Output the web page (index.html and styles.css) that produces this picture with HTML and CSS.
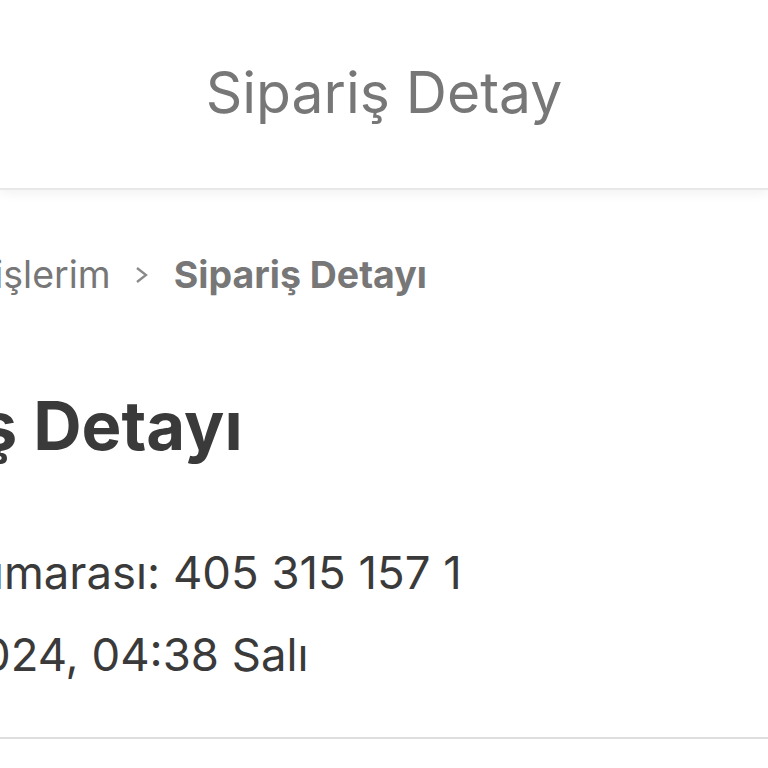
FILE: index.html
```html
<!DOCTYPE html>
<html lang="tr">

<head>
    <meta charset="UTF-8">
    <title>Sipariş Detay</title>
    <link rel="stylesheet" href="styles.css">
</head>

<body>
    <div class="topbar">Sipariş Detay</div>
    <div class="page">
        <div class="crumbs">
            <span>Hesabım</span>
            <svg class="chev" width="13" height="18" viewBox="0 0 13 18"><polyline points="2,2 11,9 2,16" fill="none" stroke="#8a8a8a" stroke-width="2.3"/></svg>
            <span>Siparişlerim</span>
            <svg class="chev" width="13" height="18" viewBox="0 0 13 18"><polyline points="2,2 11,9 2,16" fill="none" stroke="#8a8a8a" stroke-width="2.3"/></svg>
            <span class="current">Sipariş Detayı</span>
        </div>
        <h1 class="title">Sipariş Detayı</h1>
        <div class="meta">
            <p>Sipariş Numarası: 405 315 157 1</p>
            <p>12 Mart 2024, 04:38 Salı</p>
        </div>
    </div>
    <div class="divider"></div>
</body>

</html>
```
FILE: styles.css
```css
* {
    padding: 0;
    margin: 0;
}

body {
    font-family: Inter, "Noto Sans", sans-serif;
    background-color: #fff;
    overflow: hidden;
}

.topbar {
    height: 184px;
    padding-bottom: 4px;
    display: flex;
    align-items: center;
    justify-content: center;
    font-size: 57px;
    color: #777;
    border-bottom: 2px solid #e8e8e8;
    box-shadow: 0 4px 10px rgba(0, 0, 0, 0.05);
}

.page {
    margin-left: -210px;
    padding-top: 66px;
}

/* breadcrumb row is scrolled to its end */
.crumbs {
    width: 637px;
    display: flex;
    justify-content: flex-end;
    align-items: center;
    gap: 24px;
    font-size: 37.5px;
    line-height: 37px;
    color: #777;
    white-space: nowrap;
}

.crumbs span {
    flex-shrink: 0;
}

.crumbs .chev {
    flex-shrink: 0;
}

.crumbs .current {
    font-weight: 700;
    margin-left: 2px;
}

.title {
    font-size: 67px;
    line-height: 1;
    font-weight: 700;
    color: #3a3a3a;
    margin-top: 99px;
    white-space: nowrap;
}

.meta {
    margin-top: 73px;
    margin-left: -7px;
    font-size: 45.5px;
    color: #3a3a3a;
    white-space: nowrap;
}

.meta p {
    line-height: 82px;
}

.divider {
    margin-top: 41px;
    border-top: 2px solid #dedede;
}
```
